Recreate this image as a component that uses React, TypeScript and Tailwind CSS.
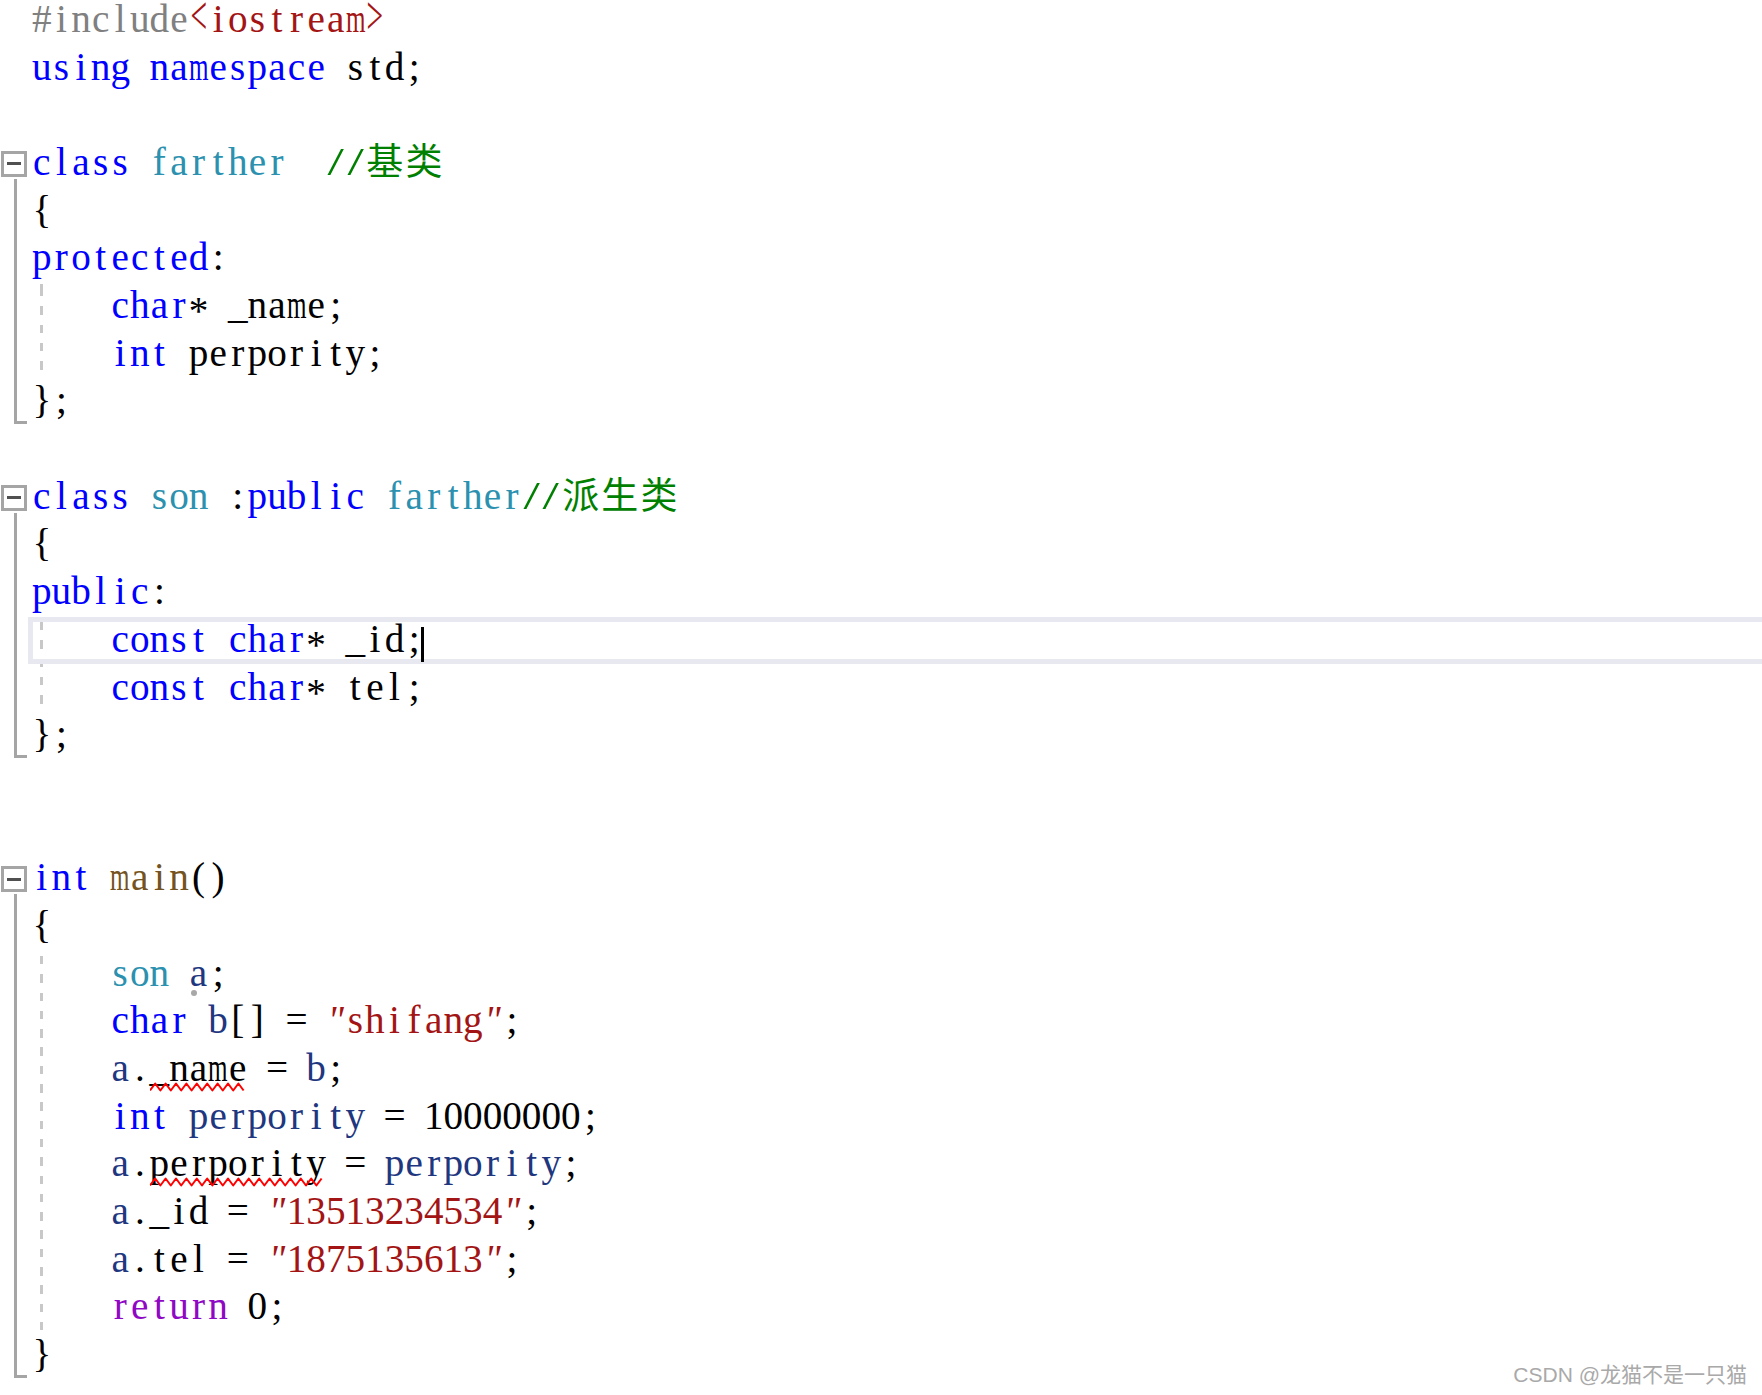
import React from "react";

const COLORS: Record<string, string> = {
  k: "text-[#0000ff]",
  t: "text-[#2b91af]",
  c: "text-[#008000]",
  s: "text-[#a31515]",
  p: "text-[#808080]",
  f: "text-[#74531f]",
  v: "text-[#1f377f]",
  r: "text-[#8f08c4]",
  d: "text-black",
};

function cellClass(ch: string): string {
  switch (ch) {
    case "m":
      return "scale-x-[0.64]";
    case "/":
      return "scale-x-[1.5]";
    case "*":
      return "translate-y-[6px]";
    case "<":
    case ">":
      return "scale-x-[0.75] scale-y-[1.4] -translate-y-[3px]";
    case '"':
      return "italic";
    default:
      return "";
  }
}

function Chars({ text }: { text: string }) {
  return (
    <>
      {Array.from(text).map((ch, i) => {
        const cjk = ch.charCodeAt(0) > 0x2e80;
        if (cjk) {
          return (
            <span
              key={i}
              className="inline-flex justify-center w-[39.2px] text-[37px] leading-[40px] font-['Noto_Sans_CJK_SC',sans-serif]"
            >
              {ch}
            </span>
          );
        }
        return (
          <span key={i} className={`inline-flex justify-center w-[19.6px] ${cellClass(ch)}`}>
            {ch === " " ? "\u00a0" : ch}
          </span>
        );
      })}
    </>
  );
}

function Squiggle({ width }: { width: number }) {
  const pts: string[] = [];
  for (let x = 0, i = 0; x <= width + 0.01; x += 5.2, i++) {
    pts.push(`${x},${i % 2 === 0 ? 8.5 : 1.5}`);
  }
  return (
    <svg
      className="absolute left-0 top-[38px] pointer-events-none"
      width={width}
      height={10}
      viewBox={`0 0 ${width} 10`}
    >
      <polyline points={pts.join(" ")} fill="none" stroke="#ff0000" strokeWidth={2} strokeLinejoin="round" />
    </svg>
  );
}

function Tk({ text, c = "d", sq, dot }: { text: string; c?: string; sq?: boolean; dot?: boolean }) {
  const cls = COLORS[c];
  if (sq || dot) {
    return (
      <span className={`relative inline-block ${cls}`}>
        <Chars text={text} />
        {sq && <Squiggle width={Array.from(text).length * 19.6} />}
        {dot && <span className="absolute left-[2px] top-[41px] w-[6px] h-[6px] rounded-full bg-[#a8a8a8]" />}
      </span>
    );
  }
  return (
    <span className={cls}>
      <Chars text={text} />
    </span>
  );
}

function L({ children, hl }: { children?: React.ReactNode; hl?: boolean }) {
  return (
    <div className="relative h-[47.7px] whitespace-nowrap">
      {hl && (
        <div className="absolute -left-[82.4px] -right-[20px] top-[2px] h-[47px] border-[5px] border-[#e8e8f0] pointer-events-none" />
      )}
      <span className="relative">{children}</span>
    </div>
  );
}

function Plain({ children }: { children?: React.ReactNode }) {
  return <div className="pl-[32px] h-[47.7px] whitespace-nowrap">{children}</div>;
}

function Guide({ children }: { children: React.ReactNode }) {
  return (
    <div className="flex">
      <div className="ml-[8px] w-[3px] shrink-0 bg-[repeating-linear-gradient(to_bottom,#c8c8c8_0px,#c8c8c8_8.5px,transparent_8.5px,transparent_18.3px)] bg-[position:0_7px]" />
      <div className="flex-1 min-w-0 pl-[67.4px]">{children}</div>
    </div>
  );
}

function Block({ header, children }: { header: React.ReactNode; children: React.ReactNode }) {
  return (
    <div className="flex">
      <div className="w-[32px] shrink-0 flex flex-col">
        <div className="h-[47.7px] pt-[13px] pl-[1px] shrink-0">
          <div className="w-[26px] h-[26px] border-[3px] border-[#a5a5a5] bg-white flex items-center justify-center">
            <div className="w-[14px] h-[3px] bg-[#505050]" />
          </div>
        </div>
        <div className="flex-1 -mt-[6.7px] ml-[14px] w-[13px] border-l-[3px] border-b-[3px] border-[#a5a5a5]" />
      </div>
      <div className="flex-1 min-w-0">
        <L>{header}</L>
        {children}
      </div>
    </div>
  );
}

export default function App() {
  return (
    <div className="relative w-full h-[1395px] overflow-hidden bg-white text-black font-['Liberation_Serif','Noto_Sans_CJK_SC',serif] text-[39.2px] leading-[47.7px]">
      <div>
        <div className="pl-[32px] h-[42.6px] leading-[37.6px] whitespace-nowrap">
          <Tk text="#include" c="p" />
          <Tk text="<iostream>" c="s" />
        </div>
        <Plain>
          <Tk text="using namespace" c="k" />
          <Tk text=" std;" />
        </Plain>
        <Plain />

        <Block
          header={
            <>
              <Tk text="class" c="k" />
              <Tk text=" " />
              <Tk text="farther" c="t" />
              <Tk text="  " />
              <Tk text="//基类" c="c" />
            </>
          }
        >
          <L>
            <Tk text="{" />
          </L>
          <L>
            <Tk text="protected" c="k" />
            <Tk text=":" />
          </L>
          <Guide>
            <L>
              <Tk text="char" c="k" />
              <Tk text="* _name;" />
            </L>
            <L>
              <Tk text="int" c="k" />
              <Tk text=" perpority;" />
            </L>
          </Guide>
          <L>
            <Tk text="};" />
          </L>
        </Block>

        <Plain />

        <Block
          header={
            <>
              <Tk text="class" c="k" />
              <Tk text=" " />
              <Tk text="son" c="t" />
              <Tk text=" :" />
              <Tk text="public" c="k" />
              <Tk text=" " />
              <Tk text="farther" c="t" />
              <Tk text="//派生类" c="c" />
            </>
          }
        >
          <L>
            <Tk text="{" />
          </L>
          <L>
            <Tk text="public" c="k" />
            <Tk text=":" />
          </L>
          <Guide>
            <L hl>
              <Tk text="const char" c="k" />
              <Tk text="* _id;" />
              <span className="inline-block w-[3px] h-[35px] bg-black -ml-[3px] align-[-10px]" />
            </L>
            <L>
              <Tk text="const char" c="k" />
              <Tk text="* tel;" />
            </L>
          </Guide>
          <L>
            <Tk text="};" />
          </L>
        </Block>

        <Plain />
        <Plain />

        <Block
          header={
            <>
              <Tk text="int" c="k" />
              <Tk text=" " />
              <Tk text="main" c="f" />
              <Tk text="()" />
            </>
          }
        >
          <L>
            <Tk text="{" />
          </L>
          <Guide>
            <L>
              <Tk text="son" c="t" />
              <Tk text=" " />
              <Tk text="a" c="v" dot />
              <Tk text=";" />
            </L>
            <L>
              <Tk text="char" c="k" />
              <Tk text=" " />
              <Tk text="b" c="v" />
              <Tk text="[] = " />
              <Tk text={'"shifang"'} c="s" />
              <Tk text=";" />
            </L>
            <L>
              <Tk text="a" c="v" />
              <Tk text="." />
              <Tk text="_name" sq />
              <Tk text=" = " />
              <Tk text="b" c="v" />
              <Tk text=";" />
            </L>
            <L>
              <Tk text="int" c="k" />
              <Tk text=" " />
              <Tk text="perpority" c="v" />
              <Tk text=" = 10000000;" />
            </L>
            <L>
              <Tk text="a" c="v" />
              <Tk text="." />
              <Tk text="perpority" sq />
              <Tk text=" = " />
              <Tk text="perpority" c="v" />
              <Tk text=";" />
            </L>
            <L>
              <Tk text="a" c="v" />
              <Tk text="._id = " />
              <Tk text={'"13513234534"'} c="s" />
              <Tk text=";" />
            </L>
            <L>
              <Tk text="a" c="v" />
              <Tk text=".tel = " />
              <Tk text={'"1875135613"'} c="s" />
              <Tk text=";" />
            </L>
            <L>
              <Tk text="return" c="r" />
              <Tk text=" 0;" />
            </L>
          </Guide>
          <L>
            <Tk text="}" />
          </L>
        </Block>
      </div>

      <div className="absolute right-[15px] bottom-[8px] text-[21px] leading-[24px] text-[#a9a9a9] font-['Liberation_Sans','Noto_Sans_CJK_SC',sans-serif] whitespace-nowrap">
        CSDN @龙猫不是一只猫
      </div>
    </div>
  );
}
